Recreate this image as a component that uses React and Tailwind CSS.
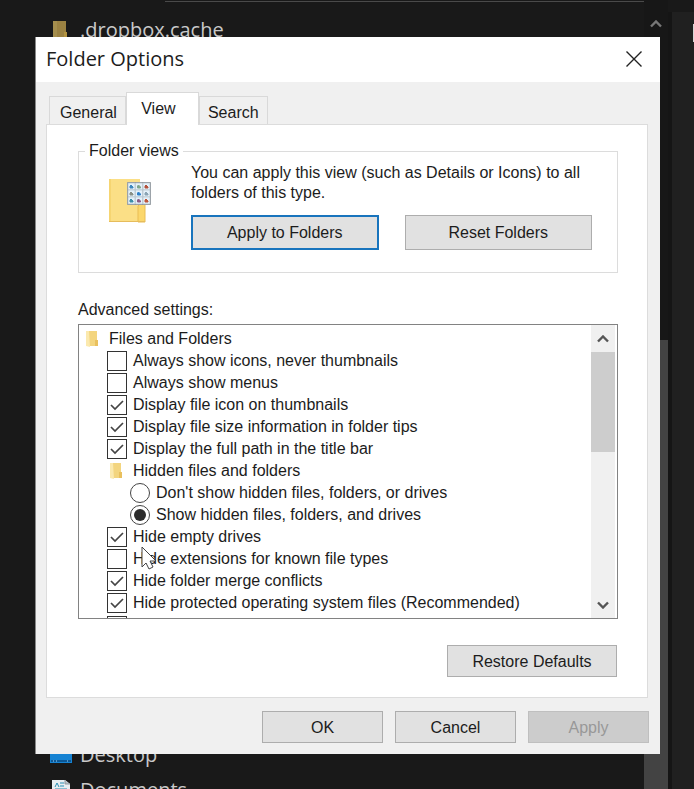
import React, { useState } from 'react';

const initialSettings = [
    { id: 'files', type: 'group', level: 0, label: 'Files and Folders' },
    { id: 'icons', type: 'checkbox', level: 1, label: 'Always show icons, never thumbnails', checked: false },
    { id: 'menus', type: 'checkbox', level: 1, label: 'Always show menus', checked: false },
    { id: 'fileIcon', type: 'checkbox', level: 1, label: 'Display file icon on thumbnails', checked: true },
    { id: 'fileSize', type: 'checkbox', level: 1, label: 'Display file size information in folder tips', checked: true },
    { id: 'fullPath', type: 'checkbox', level: 1, label: 'Display the full path in the title bar', checked: true },
    { id: 'hidden', type: 'group', level: 1, label: 'Hidden files and folders' },
    { id: 'dontShow', type: 'radio', level: 2, label: "Don't show hidden files, folders, or drives", checked: false },
    { id: 'show', type: 'radio', level: 2, label: 'Show hidden files, folders, and drives', checked: true },
    { id: 'emptyDrives', type: 'checkbox', level: 1, label: 'Hide empty drives', checked: true },
    { id: 'extensions', type: 'checkbox', level: 1, label: 'Hide extensions for known file types', checked: false },
    { id: 'merge', type: 'checkbox', level: 1, label: 'Hide folder merge conflicts', checked: true },
    { id: 'protected', type: 'checkbox', level: 1, label: 'Hide protected operating system files (Recommended)', checked: true },
];

const groupIndent = ['pl-0.5', 'pl-[26px]'];
const indent = ['pl-1', 'pl-7', 'pl-[51px]'];

function SmallFolder() {
    return (
        <svg className="h-5 w-5 shrink-0" viewBox="0 0 20 20" aria-hidden="true">
            <path d="M5 2h11v15H5z" fill="#f3d57f" />
            <path d="M5 2h3l1 16-4-1z" fill="#fbe9ae" />
            <path d="M14 11h3v6h-3z" fill="#e9c05e" />
        </svg>
    );
}

function LargeFolder() {
    const tiles = ['#3f87bd', '#7fa58a', '#b5533c', '#8a8f86', '#2f80c9', '#8ba4b4', '#3f8fa8', '#8a5b86', '#c0563a'];
    return (
        <svg className="h-[46px] w-[44px] shrink-0" viewBox="0 0 44 46" aria-hidden="true">
            <path d="M0 1h31v43H0z" fill="#fbdf86" />
            <path d="M0 1h2v43H0z" fill="#f6d571" />
            <path d="M29 28l2-2h5v18h-7z" fill="#fbd76c" stroke="#e9bd55" />
            <path d="M0 43.5h36" stroke="#e6bc5c" />
            <path d="M18.500 4.500h23v22h-23z" fill="#ffffff" stroke="#8f9499" />
            {tiles.map((fill, i) => (
                <g key={i} transform={`translate(${19 + (i % 3) * 7.5} ${5 + Math.floor(i / 3) * 7})`}>
                    <path d="M0 0h7v7H0z" fill="#e4f1fa" stroke="#b4c0c8" strokeWidth="0.7" />
                    <path d="M2 5V3l1-1 1 1 1 1v1z" fill={fill} stroke={fill} />
                </g>
            ))}
        </svg>
    );
}

function Chevron({ down, className }) {
    return (
        <svg className={className} viewBox="0 0 12 8" fill="none" stroke="currentColor" strokeWidth="2.4" aria-hidden="true">
            <path d={down ? 'M1 1.500l5 5 5-5' : 'M1 6.500l5-5 5 5'} />
        </svg>
    );
}

function SettingRow({ item, onChange }) {
    if (item.type === 'group') {
        return (
            <li className={`flex h-[22px] items-center gap-2 ${groupIndent[item.level]}`}>
                <SmallFolder />
                <span>{item.label}</span>
            </li>
        );
    }
    const isRadio = item.type === 'radio';
    return (
        <li className={indent[item.level]}>
            <label className="flex h-[22px] items-center gap-1.5">
                <span className="grid shrink-0 place-items-center">
                    <input
                        type={item.type}
                        name={isRadio ? 'hidden-files' : item.id}
                        checked={item.checked}
                        onChange={() => onChange(item)}
                        className={`col-start-1 row-start-1 h-5 w-5 appearance-none border bg-white ${isRadio ? 'rounded-full border-[#444444]' : 'border-[#333333]'}`}
                    />
                    {item.checked && (
                        <svg className="pointer-events-none col-start-1 row-start-1 h-5 w-5" viewBox="0 0 20 20" aria-hidden="true">
                            {isRadio
                                ? <circle cx="10" cy="10" r="6" fill="#2b2b2b" />
                                : <path d="M4 10l4 4 8-8" fill="none" stroke="#444444" strokeWidth="1.7" />}
                        </svg>
                    )}
                </span>
                <span>{item.label}</span>
            </label>
        </li>
    );
}

function PushButton({ children, className, ...props }) {
    return (
        <button
            type="button"
            className={`border border-[#adadad] bg-[#e1e1e1] pt-px disabled:border-[#bfbfbf] disabled:bg-[#cccccc] disabled:text-[#989898] ${className}`}
            {...props}
        >
            {children}
        </button>
    );
}

function ExplorerBackdrop() {
    return (
        <div className="absolute inset-0 flex overflow-hidden font-['Open_Sans','Noto_Sans',sans-serif] text-[20px] text-[#c9c9c9]">
            <div className="flex min-w-0 flex-1 flex-col">
                <div className="ml-[165px] h-0.5 shrink-0 border-b border-[#4a4a4a]" />
                <ul className="flex min-h-0 flex-1 flex-col pl-[50px] pt-2.5">
                    <li className="flex h-[35px] shrink-0 items-center gap-2">
                        <svg className="h-5 w-[22px]" viewBox="0 0 22 20" aria-hidden="true">
                            <path d="M3 1h13v18H3z" fill="#9b8242" />
                            <path d="M3 1h4v18H3z" fill="#a58e4d" />
                            <path d="M14 12h3v7h-3z" fill="#b39340" />
                        </svg>
                        .dropbox.cache
                    </li>
                    <li className="mt-auto flex h-[35px] shrink-0 items-center gap-2">
                        <svg className="h-5 w-[22px]" viewBox="0 0 22 20" aria-hidden="true">
                            <path d="M0 2h22v16H0z" fill="#1683d3" />
                            <path d="M1 15h20v2H1z" fill="#0b5795" />
                            <path d="M3 16h1m2 0h1m10 0h1" stroke="#9fd3f5" />
                        </svg>
                        Desktop
                    </li>
                    <li className="-mb-[18px] flex h-[35px] shrink-0 items-center gap-2">
                        <svg className="h-5 w-[22px]" viewBox="0 0 22 20" aria-hidden="true">
                            <path d="M2 0h13l5 4v16H2z" fill="#e8eef2" />
                            <path d="M15 0v4h5" fill="#b9c3ca" stroke="#8d979e" />
                            <path d="M5 7l2-4 2 4M10 3h4M10 6h4M5 9h12M5 12h12" fill="none" stroke="#2a8fb5" />
                        </svg>
                        Documents
                    </li>
                </ul>
            </div>
            <div className="flex w-6 flex-col items-center bg-[#171717] pt-5">
                <Chevron className="h-2 w-3 text-[#777777]" />
                <div className="mt-[312px] w-full flex-1 bg-[#434343]" />
            </div>
            <div className="mt-3 w-[26px] border-l-4 border-[#151515] bg-[#202020]">
                <div className="ml-auto mt-3 h-[18px] w-px bg-[#d5d5d5]" />
            </div>
        </div>
    );
}

export default function App() {
    const [settings, setSettings] = useState(initialSettings);
    const [tab, setTab] = useState('View');

    const handleChange = (target) => {
        setSettings(settings.map((item) => {
            if (target.type === 'radio') {
                return item.type === 'radio' ? { ...item, checked: item.id === target.id } : item;
            }
            return item.id === target.id ? { ...item, checked: !item.checked } : item;
        }));
    };

    return (
        <div className="relative min-h-screen overflow-hidden bg-[#191919] pb-[34px] pl-[35px] pr-[34px] pt-[37px] font-['Liberation_Sans',Arial,sans-serif] text-base leading-5 text-[#1c1c1c]">
            <ExplorerBackdrop />

            <div role="dialog" aria-labelledby="title" className="relative border-l border-[#888888] bg-[#f0f0f0]">
                <header className="flex h-[45px] items-center justify-between bg-white pb-0.5 pl-2.5 pr-[17px]">
                    <h1 id="title" className="font-['Open_Sans','Noto_Sans',sans-serif] text-[20px]">Folder Options</h1>
                    <button type="button" aria-label="Close">
                        <svg className="h-[18px] w-[18px]" viewBox="0 0 18 18" stroke="#222222" strokeWidth="1.4">
                            <path d="M1.500 1.500l15 15M16.500 1.500l-15 15" />
                        </svg>
                    </button>
                </header>

                <div className="pl-2.5 pr-3 pt-2.5">
                    <div role="tablist" className="flex items-end pl-[3px]">
                        {['General', 'View', 'Search'].map((name) => (
                            <button
                                key={name}
                                type="button"
                                role="tab"
                                aria-selected={tab === name}
                                onClick={() => setTab(name)}
                                className={tab === name
                                    ? 'relative -mb-px h-[33px] w-[73px] border border-b-0 border-[#d9d9d9] bg-white pr-2'
                                    : 'h-7 border border-b-0 border-[#d9d9d9] px-2 pt-1 first:pl-2.5'}
                            >
                                {name}
                            </button>
                        ))}
                    </div>

                    <div role="tabpanel" className="border border-[#dcdcdc] bg-white pb-5 pl-[31px] pr-[29px] pt-4">
                        <fieldset className="border border-[#dcdcdc] pb-[22px] pl-[30px] pr-[25px]">
                            <legend className="-ml-6 px-1">Folder views</legend>
                            <div className="flex gap-[38px] pt-0.5">
                                <div className="pt-[15px]">
                                    <LargeFolder />
                                </div>
                                <div className="flex-1">
                                    <p>You can apply this view (such as Details or Icons) to all folders of this type.</p>
                                    <div className="flex gap-[26px] pt-3">
                                        <PushButton className="h-[35px] flex-1 outline-2 -outline-offset-2 outline-[#1874bd]">Apply to Folders</PushButton>
                                        <PushButton className="h-[35px] flex-1">Reset Folders</PushButton>
                                    </div>
                                </div>
                            </div>
                        </fieldset>

                        <h2 id="advanced" className="pt-[27px]">Advanced settings:</h2>
                        <div className="mt-1 flex h-[295px] border border-[#828282] bg-white pr-0.5">
                            <ul aria-labelledby="advanced" className="min-w-0 flex-1 overflow-hidden whitespace-nowrap pt-[3px]">
                                {settings.map((item) => (
                                    <SettingRow key={item.id} item={item} onChange={handleChange} />
                                ))}
                                <li className="pl-7 pt-0.5"><div className="h-5 w-5 border border-[#333333]" /></li>
                            </ul>
                            <div className="flex w-6 flex-col bg-[#f0f0f0]">
                                <button type="button" aria-label="Scroll up" className="grid h-[27px] place-items-center">
                                    <Chevron className="h-2 w-3 text-[#555555]" />
                                </button>
                                <div className="h-[100px] bg-[#cdcdcd]" />
                                <button type="button" aria-label="Scroll down" className="mt-auto grid h-[27px] place-items-center">
                                    <Chevron down className="h-2 w-3 text-[#555555]" />
                                </button>
                            </div>
                        </div>

                        <div className="flex justify-end pr-px pt-[26px]">
                            <PushButton className="h-8 w-[170px]" onClick={() => setSettings(initialSettings)}>Restore Defaults</PushButton>
                        </div>
                    </div>
                </div>

                <footer className="flex justify-end gap-3 pb-[11px] pr-[11px] pt-[13px]">
                    <PushButton className="h-8 w-[121px]">OK</PushButton>
                    <PushButton className="h-8 w-[121px]">Cancel</PushButton>
                    <PushButton className="h-8 w-[121px]" disabled>Apply</PushButton>
                </footer>

                {/* mouse pointer */}
                <svg className="pointer-events-none absolute left-[105px] top-[509px] h-[25px] w-4" viewBox="0 0 16 25" aria-hidden="true">
                    <path d="M1 1v20l4-4 3 6 4-2-3-6h6z" fill="#ffffff" stroke="#444444" />
                </svg>
            </div>
        </div>
    );
}
